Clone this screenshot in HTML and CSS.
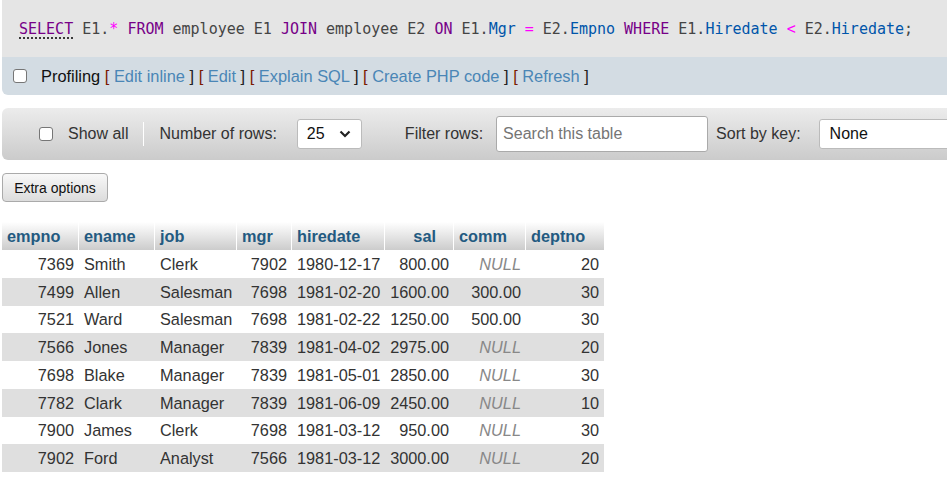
FILE: index.html
```html
<!DOCTYPE html>
<html>
<head>
<meta charset="utf-8">
<link rel="stylesheet" href="styles.css">
</head>
<body>
<div class="sqlbox">
  <code class="sql"><span class="kw kwsel">SELECT</span> E1.<span class="op">*</span> <span class="kw">FROM</span> employee E1 <span class="kw">JOIN</span> employee E2 <span class="kw">ON</span> E1.<span class="var">Mgr</span> <span class="op">=</span> E2.<span class="var">Empno</span> <span class="kw">WHERE</span> E1.<span class="var">Hiredate</span> <span class="op">&lt;</span> E2.<span class="var">Hiredate</span>;</code>
</div>
<div class="profbar">
  <input type="checkbox" class="chk"><span class="plinks"><span class="plabel">Profiling</span> <span class="br">[</span> <a class="lnk">Edit inline</a> <span class="br2">]</span> <span class="br">[</span> <a class="lnk">Edit</a> <span class="br2">]</span> <span class="br">[</span> <a class="lnk">Explain SQL</a> <span class="br2">]</span> <span class="br">[</span> <a class="lnk">Create PHP code</a> <span class="br2">]</span> <span class="br">[</span> <a class="lnk">Refresh</a> <span class="br2">]</span></span>
</div>
<div class="toolbar">
  <label class="showall"><input type="checkbox" class="chk"><span>Show all</span></label>
  <span class="sep"></span>
  <span class="tlabel">Number of rows:</span>
  <div class="dropdown rows"><span>25</span><svg width="12" height="8" viewBox="0 0 12 8"><path d="M1.5 1.5 L6 6 L10.5 1.5" fill="none" stroke="#222" stroke-width="2.2"/></svg></div>
  <span class="tlabel filt">Filter rows:</span>
  <div class="search">Search this table</div>
  <span class="tlabel sortlbl">Sort by key:</span>
  <div class="dropdown sortkey"><span>None</span></div>
</div>
<button class="extra">Extra options</button>
<table class="data">
  <colgroup>
    <col class="c1"><col class="c2"><col class="c3"><col class="c4"><col class="c5"><col class="c6"><col class="c7"><col class="c8">
  </colgroup>
  <thead>
    <tr><th>empno</th><th>ename</th><th>job</th><th>mgr</th><th>hiredate</th><th class="r">sal</th><th>comm</th><th>deptno</th></tr>
  </thead>
  <tbody>
    <tr><td class="r">7369</td><td>Smith</td><td>Clerk</td><td class="r">7902</td><td>1980-12-17</td><td class="r">800.00</td><td class="r null">NULL</td><td class="r">20</td></tr>
    <tr><td class="r">7499</td><td>Allen</td><td>Salesman</td><td class="r">7698</td><td>1981-02-20</td><td class="r">1600.00</td><td class="r">300.00</td><td class="r">30</td></tr>
    <tr><td class="r">7521</td><td>Ward</td><td>Salesman</td><td class="r">7698</td><td>1981-02-22</td><td class="r">1250.00</td><td class="r">500.00</td><td class="r">30</td></tr>
    <tr><td class="r">7566</td><td>Jones</td><td>Manager</td><td class="r">7839</td><td>1981-04-02</td><td class="r">2975.00</td><td class="r null">NULL</td><td class="r">20</td></tr>
    <tr><td class="r">7698</td><td>Blake</td><td>Manager</td><td class="r">7839</td><td>1981-05-01</td><td class="r">2850.00</td><td class="r null">NULL</td><td class="r">30</td></tr>
    <tr><td class="r">7782</td><td>Clark</td><td>Manager</td><td class="r">7839</td><td>1981-06-09</td><td class="r">2450.00</td><td class="r null">NULL</td><td class="r">10</td></tr>
    <tr><td class="r">7900</td><td>James</td><td>Clerk</td><td class="r">7698</td><td>1981-03-12</td><td class="r">950.00</td><td class="r null">NULL</td><td class="r">30</td></tr>
    <tr><td class="r">7902</td><td>Ford</td><td>Analyst</td><td class="r">7566</td><td>1981-03-12</td><td class="r">3000.00</td><td class="r null">NULL</td><td class="r">20</td></tr>
  </tbody>
</table>
</body>
</html>
```
FILE: styles.css
```css
html, body { margin: 0; padding: 0; background: #fff; }
body {
  font-family: "Liberation Sans", Arial, sans-serif;
  font-size: 16px;
  color: #444;
  overflow: hidden;
}
.sqlbox {
  margin-left: 2px;
  background: #e5e5e5;
  height: 57px;
  display: flex;
  align-items: center;
  padding-left: 17px;
  white-space: nowrap;
  overflow: hidden;
}
.sql {
  font-family: "DejaVu Sans Mono", monospace;
  font-size: 15px;
  color: #444;
  padding-top: 1px;
}
.kw { color: #770088; }
.kwsel {
  text-decoration-line: underline;
  text-decoration-style: dotted;
  text-decoration-color: #000;
  text-underline-offset: 4px;
}
.op { color: #ff00ff; }
.var { color: #0055aa; }
.profbar {
  margin-left: 2px;
  background: #d3dce3;
  height: 38px;
  display: flex;
  align-items: center;
  padding-left: 11px;
  border-bottom-left-radius: 6px;
  white-space: nowrap;
}
.plinks { font-size: 16.4px; }
.chk {
  appearance: none;
  width: 14px;
  height: 14px;
  margin: 0;
  border: 1px solid #767676;
  border-radius: 3px;
  background: #fff;
  flex: none;
}
.profbar .chk { margin-right: 14px; }
.plabel { color: #111; }
.br { color: #7a1a00; }
.br2 { color: #222; }
.lnk { color: #4a86b6; }
.toolbar {
  margin: 13px 0 0 2px;
  height: 52px;
  border-radius: 6px 0 0 6px;
  background: linear-gradient(#ececec, #cbcbcb);
  display: flex;
  align-items: center;
  padding-left: 37px;
  white-space: nowrap;
  overflow: hidden;
}
.showall { display: flex; align-items: center; color: #333; }
.showall .chk { margin-right: 15px; }
.sep {
  width: 2px;
  height: 24px;
  background: #aaa;
  border-right: 1px solid #fff;
  margin: 0 15px 0 15px;
}
.tlabel { color: #333; }
.dropdown {
  height: 30px;
  box-sizing: border-box;
  background: #fff;
  border: 1px solid #bbb;
  border-radius: 3px;
  display: flex;
  align-items: center;
  color: #111;
  flex: none;
}
.rows { width: 65px; margin-left: 20px; padding: 0 10px 0 9px; justify-content: space-between; }
.filt { margin-left: 43px; }
.search {
  width: 212px;
  height: 36px;
  box-sizing: border-box;
  margin-left: 13px;
  background: #fff;
  border: 1px solid #aaa;
  border-radius: 3px;
  display: flex;
  align-items: center;
  padding-left: 6px;
  color: #757575;
  flex: none;
}
.sortlbl { margin-left: 8px; }
.sortkey { margin-left: 18px; width: 200px; padding-left: 10px; }
.extra {
  display: block;
  margin: 13px 0 0 2px;
  width: 106px;
  height: 29px;
  font-family: "Liberation Sans", Arial, sans-serif;
  font-size: 14px;
  color: #111;
  background: linear-gradient(#f8f8f8, #dcdcdc);
  border: 1px solid #aaa;
  border-radius: 4px;
  padding: 0;
}
.data {
  margin: 20px 0 0 2px;
  border-collapse: separate;
  border-spacing: 0;
  table-layout: fixed;
  width: 602px;
  font-size: 16.3px;
}
.c1 { width: 77px; }
.c2 { width: 76px; }
.c3 { width: 82px; }
.c4 { width: 55px; }
.c5 { width: 93px; }
.c6 { width: 69px; }
.c7 { width: 72px; }
.c8 { width: 78px; }
.data th {
  font-weight: bold;
  color: #235a81;
  text-align: left;
  height: 28px;
  padding: 0 4px 0 5px;
  background: linear-gradient(#fff, #ccc);
  border-right: 1px solid #fff;
  white-space: nowrap;
  overflow: hidden;
}
.data th:last-child { border-right: 0; }
.data th.r { text-align: right; padding-right: 17px; }
.data td {
  height: 27.75px;
  line-height: 18px;
  padding: 0 5px;
  white-space: nowrap;
  color: #333;
}
.data td.r { text-align: right; }
.data td.null { color: #888; font-style: italic; }
.data tbody tr:nth-child(even) td { background: #dfdfdf; }
.data tbody tr:nth-child(odd) td { background: #fff; }
```
